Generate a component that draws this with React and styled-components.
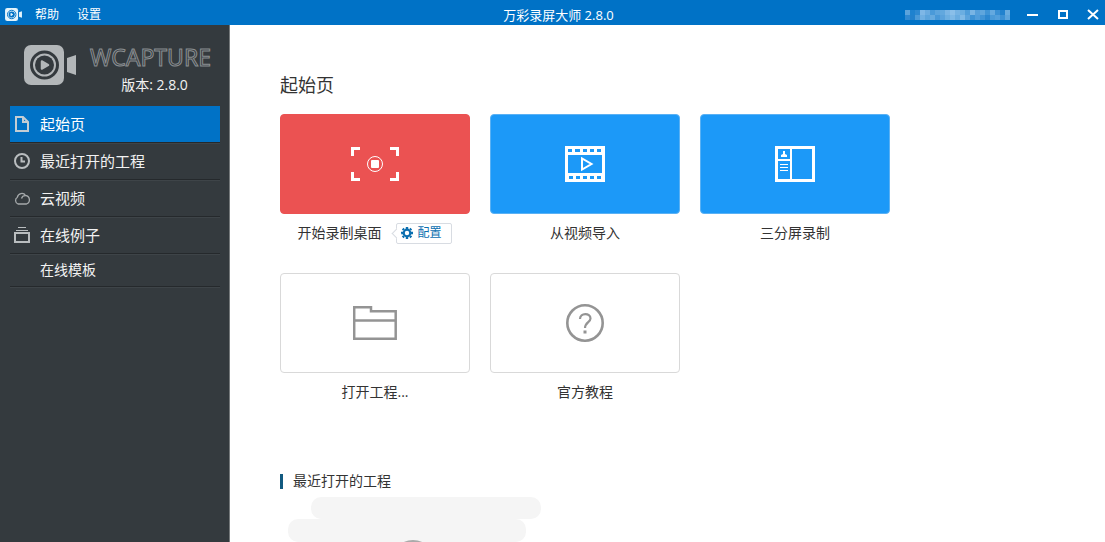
import React from "react";
import styled, { createGlobalStyle } from "styled-components";

const Global = createGlobalStyle`
  * { box-sizing: border-box; }
  body {
    margin: 0;
    background: #fff;
    color: #333;
    font-family: "Open Sans", "Noto Sans CJK SC", sans-serif;
    font-size: 14px;
    line-height: 20px;
  }
  button { font: inherit; color: inherit; background: none; border: 0; padding: 0; margin: 0; cursor: pointer; }
  svg { display: block; flex: none; }
`;

const Window = styled.div`
  display: flex;
  flex-direction: column;
  height: 100vh;
  overflow: hidden;
`;

const TitleBar = styled.header`
  display: grid;
  grid-template-columns: 1fr auto 1fr;
  align-items: center;
  flex: none;
  height: 25px;
  padding: 3px 5px 0;
  background: #0072c6;
  color: #fff;
`;

const MenuBar = styled.nav`
  display: flex;
  align-items: center;
  gap: 18px;
  padding-bottom: 2px;
`;

const MenuButton = styled.button`
  padding-top: 2px;
  font-size: 12px;
  line-height: 20px;
  &:first-of-type { margin-left: -5px; }
`;

const WindowTitle = styled.div`
  padding-left: 12px;
  font-size: 13px;
`;

const WindowControls = styled.div`
  display: flex;
  justify-content: flex-end;
  align-items: center;
  gap: 16px;
`;

const ControlButton = styled.button`
  display: flex;
  align-items: center;
  justify-content: center;
  width: 14px;
  height: 20px;
`;

const Body = styled.div`
  display: flex;
  flex: 1;
  min-height: 0;
`;

const Sidebar = styled.aside`
  flex: none;
  width: 230px;
  padding: 20px 9px 0 10px;
  background: #343a3e;
  border-right: 1px solid #75797b;
  color: #f2f2f2;
`;

const Brand = styled.div`
  display: flex;
  gap: 14px;
  height: 61px;
  padding-left: 14px;
`;

const BrandText = styled.div`
  display: flex;
  flex-direction: column;
  align-items: center;
`;

const Wordmark = styled.div`
  font-family: "Noto Sans", sans-serif;
  font-size: 23px;
  line-height: 24px;
  color: #343a3e;
  -webkit-text-stroke: 1px #8b8f92;
`;

const Version = styled.div`
  padding-left: 8px;
  line-height: 32px;
`;

const NavItem = styled.button`
  display: flex;
  align-items: center;
  gap: 9px;
  width: 100%;
  height: ${(p) => (p.$small ? 33 : 37)}px;
  padding-left: 3px;
  border-bottom: 1px solid #25292c;
  box-shadow: 0 1px #3e4448;
  background: ${(p) => (p.$active ? "#0072c6" : "transparent")};
  color: ${(p) => (p.$active ? "#fff" : "#f2f2f2")};
  font-size: ${(p) => (p.$small ? 14 : 15)}px;
  text-align: left;
`;

const NavIcon = styled.span`
  width: 18px;
  height: 18px;
`;

const Main = styled.main`
  flex: 1;
  min-width: 0;
  padding: 46px 50px 0;
`;

const PageTitle = styled.h1`
  margin: 0 0 15px;
  font-size: 18px;
  font-weight: 400;
  line-height: 28px;
`;

const CardGrid = styled.div`
  display: grid;
  grid-template-columns: repeat(auto-fill, 190px);
  gap: 30px 20px;
`;

const CardItem = styled.div`
  display: flex;
  flex-direction: column;
  gap: 8px;
`;

const Card = styled.button`
  display: flex;
  align-items: center;
  justify-content: center;
  height: 100px;
  border: 1px solid ${(p) => p.$border};
  border-radius: 4px;
  background: ${(p) => p.$bg};
`;

const CardCaption = styled.div`
  display: flex;
  align-items: center;
  justify-content: center;
  gap: 15px;
  height: 21px;
`;

const ConfigButton = styled.button`
  position: relative;
  display: flex;
  align-items: center;
  gap: 4px;
  height: 21px;
  margin: 1px 1px 0 0;
  padding: 0 9px 0 4px;
  border: 1px solid #d8dce2;
  border-radius: 2px;
  background: #fff;
  color: #0b6fb0;
  font-size: 12px;
  &::before {
    content: "";
    position: absolute;
    left: -4px;
    top: 6px;
    width: 6px;
    height: 6px;
    border-left: 1px solid #d8dce2;
    border-bottom: 1px solid #d8dce2;
    background: #fff;
    transform: rotate(45deg);
  }
`;

const SectionTitle = styled.h2`
  margin: 67px 0 0;
  display: flex;
  align-items: center;
  gap: 10px;
  font-size: 14px;
  font-weight: 400;
  line-height: 24px;
  &::before {
    content: "";
    width: 3px;
    height: 15px;
    background: #125a80;
  }
`;

const RecentPlaceholder = styled.div`
  padding: 4px 0 0 8px;
`;

const Camera = ({ width, height, color, hole }) => (
  <svg width={width} height={height} viewBox="0 0 52 40" aria-hidden="true">
    <rect width="40" height="40" rx="7" fill={color} />
    <path d="M43 13L52 10V30L43 27Z" fill={color} />
    <circle cx="20.500" cy="20" r="13" fill="none" stroke={hole} strokeWidth="3" />
    <circle cx="20.500" cy="20" r="9.500" fill={hole} />
    <path d="M18 16.500L24 20L18 23.500Z" fill={color} stroke={color} strokeWidth="2.500" strokeLinejoin="round" />
  </svg>
);

const FileIcon = () => (
  <svg width="18" height="18" fill="none" stroke="#c3cdd4" strokeWidth="2">
    <path d="M3 2H10L15 7V16H3ZM10 2V7H15" />
  </svg>
);
const ClockIcon = () => (
  <svg width="18" height="18" fill="none" stroke="#b9bdbf" strokeWidth="2">
    <circle cx="9" cy="9" r="7" />
    <path d="M8.500 5V9.500H12" />
  </svg>
);
const CloudIcon = () => (
  <svg width="18" height="18" fill="none" stroke="#a5a9ab" strokeWidth="1.300">
    <path d="M5 15A3.800 3.800 0 0 1 4.400 8.200A4.500 4.500 0 0 1 12.600 6.500A4.400 4.400 0 0 1 13.500 15ZM8.500 9.500A4 4 0 0 1 12.600 6.600" />
  </svg>
);
const StackIcon = () => (
  <svg width="18" height="18" fill="none" stroke="#b9bdbf">
    <path d="M5 1.500H13M3 4.500H15" strokeWidth="1" />
    <path d="M2 7H16V16H2Z" strokeWidth="2" />
  </svg>
);

const RecordIcon = () => (
  <svg width="50" height="36" fill="none" stroke="#fff">
    <path d="M2.500 10V2.500H10M40 2.500H47.500V10M2.500 26V33.500H10M40 33.500H47.500V26" strokeWidth="3" />
    <circle cx="25" cy="18" r="7.500" />
    <rect x="21" y="14" width="8" height="8" rx="1" fill="#fff" stroke="none" />
  </svg>
);
const FilmIcon = () => (
  <svg width="40" height="36" fill="#fff">
    <path fillRule="evenodd" d="M0 0H40V36H0ZM3 9V27H37V9ZM3 3V6H7V3ZM10 3V6H15V3ZM18 3V6H22V3ZM25 3V6H29V3ZM32 3V6H36V3ZM4 30V33H8V30ZM11 30V33H15V30ZM18 30V33H22V30ZM25 30V33H29V30ZM32 30V33H36V30Z" />
    <path d="M17 12.500V23.500L26.500 18Z" fill="none" stroke="#fff" strokeWidth="2" />
  </svg>
);
const SplitIcon = () => (
  <svg width="40" height="36" fill="none" stroke="#fff">
    <path d="M1.500 1.500H38.500V34.500H1.500Z" strokeWidth="3" />
    <path d="M16 2V34M2 14H16" strokeWidth="2" />
    <path d="M5 18.500H13M5 21.500H13M5 24.500H13" />
    <path d="M6 11V9L8 8V5H10V8L12 9V11Z" fill="#fff" stroke="none" />
  </svg>
);
const FolderIcon = () => (
  <svg width="44" height="34" fill="none" stroke="#949494" strokeWidth="2.500">
    <path d="M1.200 32.700V1.300H18V5.300H42.700V32.700ZM1 14.500H43" />
  </svg>
);
const HelpIcon = () => (
  <svg width="38" height="38" fill="none" stroke="#949494">
    <circle cx="19" cy="19" r="17.700" strokeWidth="2.600" />
    <path d="M14 15C14 8.500 24.500 8.500 24.500 14.500C24.500 18 19 18.500 19 24" strokeWidth="2.200" />
    <rect x="17.500" y="26.500" width="3" height="3" fill="#949494" stroke="none" />
  </svg>
);
const GearIcon = () => (
  <svg width="12" height="12" fill="none" stroke="#0b6fb0">
    <circle cx="6" cy="6" r="3.300" strokeWidth="2.200" />
    <path d="M6 0V2M6 10V12M0 6H2M10 6H12M1.700 1.700L3 3M9 9L10.300 10.300M10.300 1.700L9 3M3 9L1.700 10.300" strokeWidth="2.400" />
  </svg>
);

const MOSAIC = [
  ["#5ba3dc", "#1e82cf", "#2d89d2", "#7eb7e6", "#6aabe0", "#4a9ad9", "#5ca4dd", "#62a8de", "#7ab5e5", "#8abfe9", "#74b2e3", "#6baee1", "#4f9dda", "#78b4e4", "#559fdb", "#5fa6dd", "#3f94d6", "#64a9df", "#3a90d4", "#2182ce", "#69ace0"],
  ["#3089d1", "#2181cd", "#4b9ad8", "#6fafe2", "#5ca4dc", "#66aadf", "#4898d8", "#5aa2dc", "#6dafe1", "#7db8e6", "#69ace0", "#7fb9e6", "#5ba3dc", "#3d92d5", "#509ddb", "#4094d6", "#2b87d0", "#4a9ad8", "#539fdb", "#3b91d5", "#5da5dd"],
];
const MaskedAccount = () => (
  <svg width="105" height="12" aria-hidden="true">
    {MOSAIC.map((row, y) =>
      row.map((c, x) => <rect key={`${x}-${y}`} x={x * 5} y={1 + y * 5} width="5" height="5" fill={c} />)
    )}
  </svg>
);

const NAV = [
  { label: "起始页", icon: <FileIcon />, active: true },
  { label: "最近打开的工程", icon: <ClockIcon /> },
  { label: "云视频", icon: <CloudIcon /> },
  { label: "在线例子", icon: <StackIcon /> },
  { label: "在线模板", small: true },
];

const CARDS = [
  { label: "开始录制桌面", icon: <RecordIcon />, bg: "#eb5252", border: "#eb5252", config: true },
  { label: "从视频导入", icon: <FilmIcon />, bg: "#1c99f8", border: "#5ab1f4" },
  { label: "三分屏录制", icon: <SplitIcon />, bg: "#1c99f8", border: "#5ab1f4" },
  { label: "打开工程...", icon: <FolderIcon />, bg: "#fff", border: "#d9d9d9" },
  { label: "官方教程", icon: <HelpIcon />, bg: "#fff", border: "#d9d9d9" },
];

export default function App() {
  return (
    <Window>
      <Global />
      <TitleBar>
        <MenuBar>
          <Camera width={17} height={13} color="#e4f4fb" hole="#0072c6" />
          <MenuButton>帮助</MenuButton>
          <MenuButton>设置</MenuButton>
        </MenuBar>
        <WindowTitle>万彩录屏大师 2.8.0</WindowTitle>
        <WindowControls>
          <MaskedAccount />
          <ControlButton aria-label="最小化">
            <svg width="12" height="12" stroke="#fff" strokeWidth="2"><path d="M0 6H11" /></svg>
          </ControlButton>
          <ControlButton aria-label="最大化">
            <svg width="12" height="12" fill="none" stroke="#fff" strokeWidth="2"><path d="M2 2H10V9H2Z" /></svg>
          </ControlButton>
          <ControlButton aria-label="关闭">
            <svg width="12" height="12" stroke="#fff" strokeWidth="2"><path d="M1 1L11 10M11 1L1 10" /></svg>
          </ControlButton>
        </WindowControls>
      </TitleBar>
      <Body>
        <Sidebar>
          <Brand>
            <Camera width={52} height={40} color="#b3b7b9" hole="#343a3e" />
            <BrandText>
              <Wordmark>WCAPTURE</Wordmark>
              <Version>版本: 2.8.0</Version>
            </BrandText>
          </Brand>
          <nav>
            {NAV.map((n) => (
              <NavItem key={n.label} $active={n.active} $small={n.small}>
                <NavIcon>{n.icon}</NavIcon>
                {n.label}
              </NavItem>
            ))}
          </nav>
        </Sidebar>
        <Main>
          <PageTitle>起始页</PageTitle>
          <CardGrid>
            {CARDS.map((c) => (
              <CardItem key={c.label}>
                <Card $bg={c.bg} $border={c.border} aria-label={c.label}>{c.icon}</Card>
                <CardCaption>
                  <span>{c.label}</span>
                  {c.config && (
                    <ConfigButton>
                      <GearIcon />
                      配置
                    </ConfigButton>
                  )}
                </CardCaption>
              </CardItem>
            ))}
          </CardGrid>
          <SectionTitle>最近打开的工程</SectionTitle>
          <RecentPlaceholder>
            <svg width="253" height="46" fill="#f5f5f5" aria-hidden="true">
              <rect x="23" width="230" height="22" rx="10" />
              <rect y="22" width="238" height="23" rx="10" />
              <ellipse cx="125" cy="49" rx="12" ry="6" fill="#aaa" />
            </svg>
          </RecentPlaceholder>
        </Main>
      </Body>
    </Window>
  );
}
